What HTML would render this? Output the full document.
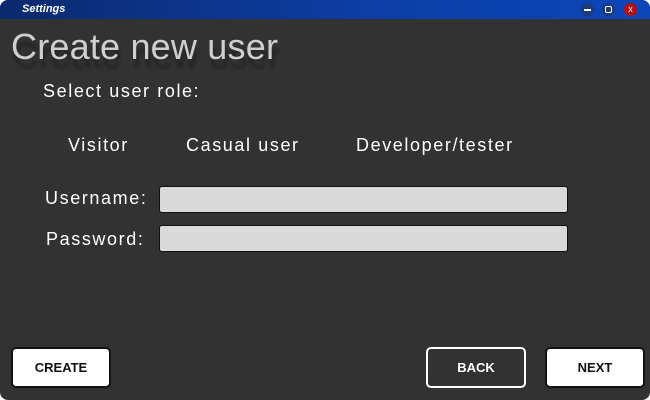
<!DOCTYPE html>
<html><head><style>
*{margin:0;padding:0;box-sizing:border-box}
body{width:650px;height:400px;background:#fff;overflow:hidden;font-family:"Liberation Sans",sans-serif}
.win{position:absolute;left:0;top:0;width:650px;height:400px;background:#323232;border-radius:8px;overflow:hidden}
.tb{position:absolute;left:0;top:0;width:650px;height:19px;background:linear-gradient(90deg,#0b2a6e,#0c3fa8 60%,#0d46b8)}
.tb span{position:absolute;left:22px;top:3px;color:#fff;font-size:11px;font-style:italic;font-weight:bold}
.ic{position:absolute;top:3px;width:13px;height:13px;border-radius:50%}
.t{position:absolute;color:#fff;font-size:18px;letter-spacing:1.6px}
h1{position:absolute;left:11px;top:26px;font-weight:normal;font-size:36px;color:#cfcfcf;letter-spacing:0.2px;text-shadow:2px 9px 3px rgba(0,0,0,.3)}
.in{position:absolute;left:159px;width:409px;height:27px;background:#d9d9d9;border:1px solid #111;border-radius:3px}
.b{position:absolute;top:347px;width:100px;height:41px;border-radius:5px;font-weight:bold;font-size:13px;display:flex;align-items:center;justify-content:center}
.w{background:#fff;border:2px solid #111;color:#111}
.d{background:#323232;border:2px solid #fff;color:#fff}
</style></head><body><div class="win">
<div class="tb"><span>Settings</span>
<div class="ic" style="left:581px;background:#1d3a7a"><div style="position:absolute;left:3px;top:6px;width:7px;height:2px;background:#fff"></div></div>
<div class="ic" style="left:602px;background:#1d3a7a"><div style="position:absolute;left:3px;top:3px;width:7px;height:7px;border:1.5px solid #fff;border-radius:2px"></div></div>
<div class="ic" style="left:624px;background:#b01010;color:#fff;font-size:9px;text-align:center;line-height:13px">x</div>
</div>
<h1>Create new user</h1>
<div class="t" style="left:43px;top:81px">Select user role:</div>
<div class="t" style="left:68px;top:135px">Visitor</div>
<div class="t" style="left:186px;top:135px">Casual user</div>
<div class="t" style="left:356px;top:135px">Developer/tester</div>
<div class="t" style="left:45px;top:188px">Username:</div>
<div class="t" style="left:46px;top:229px">Password:</div>
<div class="in" style="top:186px"></div>
<div class="in" style="top:225px"></div>
<div class="b w" style="left:11px">CREATE</div>
<div class="b d" style="left:426px">BACK</div>
<div class="b w" style="left:545px">NEXT</div>
</div></body></html>
